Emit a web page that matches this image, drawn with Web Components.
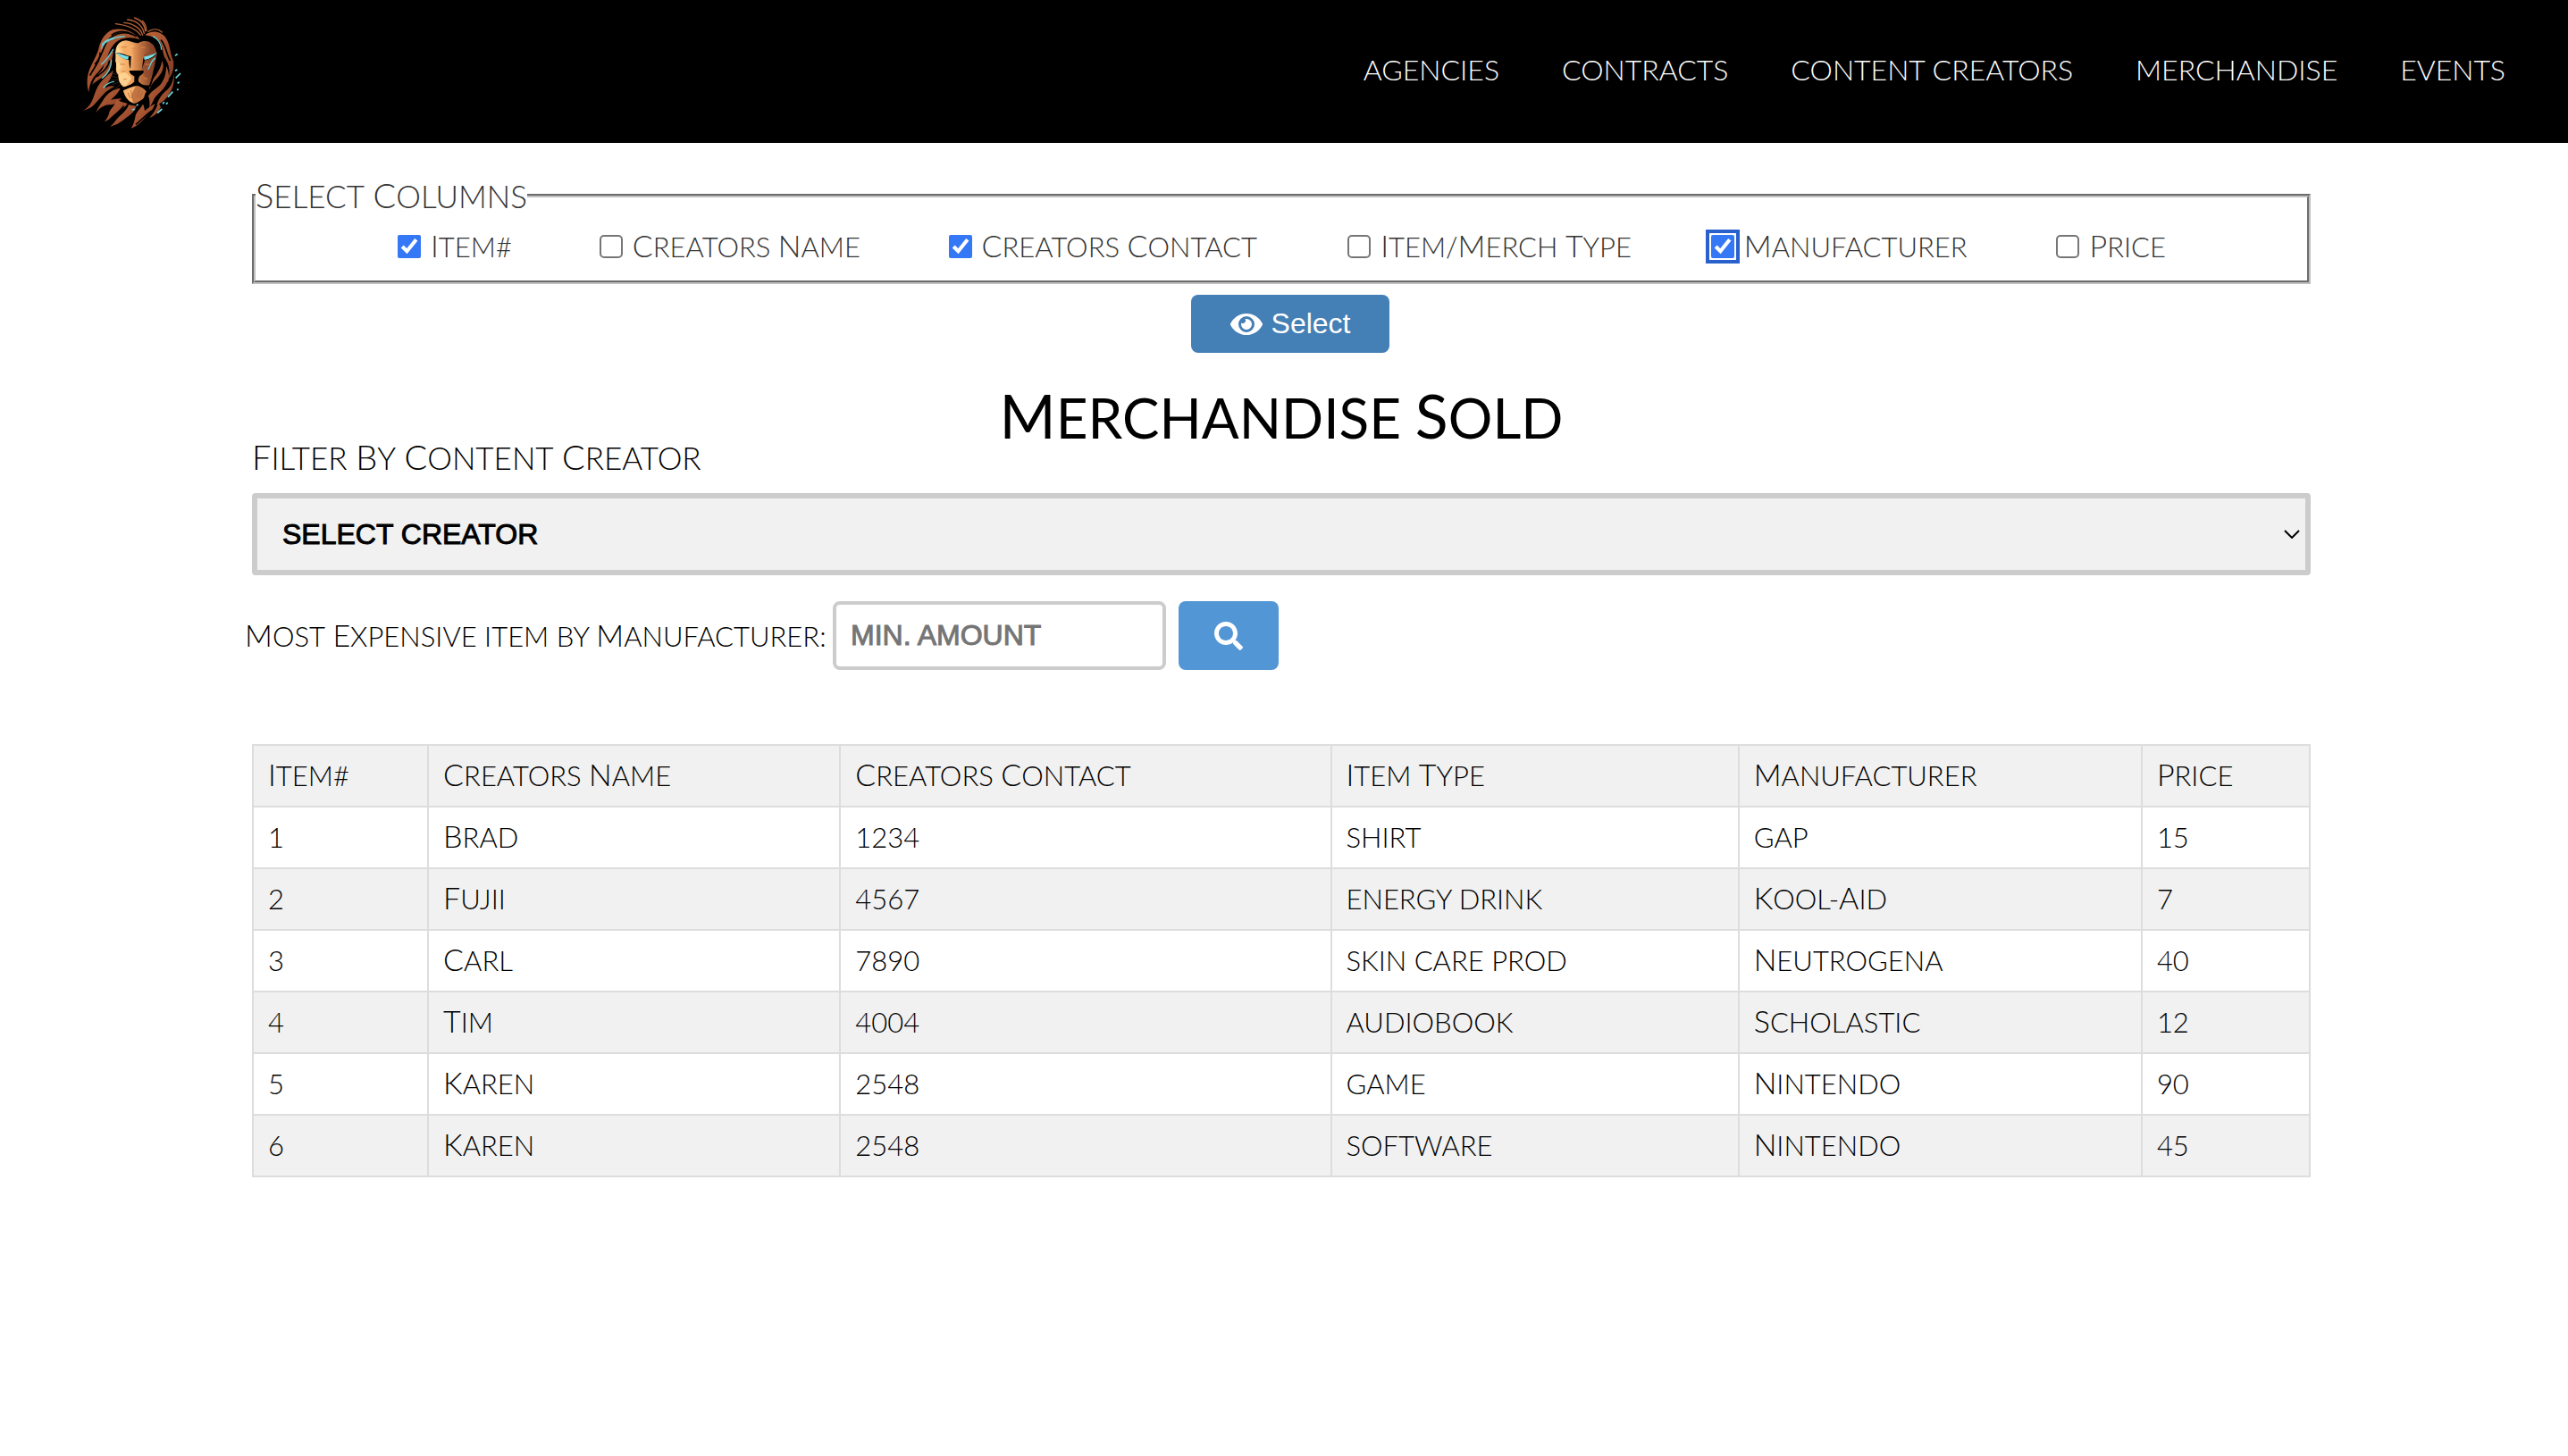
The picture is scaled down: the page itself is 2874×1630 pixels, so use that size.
<!DOCTYPE html>
<html lang="en">
<head>
<meta charset="utf-8">
<title>Merchandise</title>
<style>
body { margin: 0; background: #fff; color: #000; font-family: Lato, "Open Sans", sans-serif; font-weight: 300; font-size: 31px; line-height: 40px; }
</style>
</head>
<body>
<merch-page></merch-page>
<script>
// Wraps capitalised words so that their first letter can be set a step larger.
const caps = (text) => text.replace(/[A-Za-z#:]+[\/-]?/g, (w) =>
  /^[A-Z]/.test(w) ? `<span class="w">${w}</span>` : w);

const CAPS_CSS = `
  .caps { text-transform: uppercase; }
  .w { display: inline-block; }
  .w::first-letter { font-size: var(--cap, 34px); }
`;

class BaseElement extends HTMLElement {
  connectedCallback() {
    if (this.shadowRoot) return;
    this.attachShadow({ mode: 'open' }).innerHTML = `<style>*{box-sizing:border-box}${CAPS_CSS}${this.css()}</style>${this.html()}`;
  }
}

class LionLogo extends BaseElement {
  css() { return `:host{display:block} svg{display:block;width:180px;height:160px}`; }
  html() {
    return `<svg viewBox="0 0 540 480" role="img" aria-label="Lion">
    <defs>
      <linearGradient id="face" x1="0" x2="1"><stop offset="0" stop-color="#ffd08b"/><stop offset=".4" stop-color="#eda05c"/><stop offset=".6" stop-color="#c27542"/><stop offset="1" stop-color="#6b321f"/></linearGradient>
      <linearGradient id="mane" x1="0" y1="0" x2="1" y2="1"><stop offset="0" stop-color="#bd6439"/><stop offset=".55" stop-color="#a04f2f"/><stop offset="1" stop-color="#7c3a26"/></linearGradient>
    </defs>
    <g fill="url(#mane)">
      <path d="M290 133C270 104 230 92 198 100C170 110 156 140 150 168C140 200 114 232 113 268C112 286 114 298 118 310C120 280 130 262 148 244C160 230 172 216 180 196C186 170 200 142 226 132C250 124 270 126 290 133Z"/>
      <path d="M306 118C330 98 362 106 376 126C392 148 390 180 402 204C406 232 398 252 384 268C394 240 386 214 376 198C364 182 370 156 354 138C340 124 322 120 306 118Z"/>
      <path d="M202 172C184 180 172 206 166 228C156 246 138 258 130 284C146 268 168 262 180 246C194 226 194 200 202 172Z"/>
      <path d="M200 236C182 252 168 262 154 282C138 304 136 330 124 348C118 358 108 366 100 371C122 366 142 352 154 334C168 312 184 300 206 290C190 286 184 290 172 296C182 276 196 262 200 236Z"/>
      <path d="M224 296C200 300 182 312 170 330C162 344 152 356 142 378C158 358 176 350 190 352C204 352 218 344 228 330C212 332 202 332 192 336C204 324 218 312 224 296Z"/>
      <path d="M212 334C208 350 196 362 188 374C184 390 178 400 170 409C186 402 200 394 210 382C226 366 240 362 248 348C238 344 224 344 212 334Z"/>
      <path d="M252 352C246 370 230 382 218 394C208 404 202 416 190 425C214 420 232 406 246 394C262 382 274 372 278 356Z"/>
      <path d="M300 350C290 368 276 376 274 394C270 410 268 420 260 431C280 424 294 410 306 396C318 382 334 372 340 348C326 356 316 364 306 372C304 364 304 356 300 350Z"/>
      <path d="M318 322C330 304 350 296 362 280C374 262 378 244 378 222C390 246 390 270 378 290C366 306 350 314 340 328C334 340 328 352 322 362C322 348 324 336 318 322Z"/>
      <path d="M364 204C374 226 364 246 350 260C336 274 326 284 322 300C314 280 330 262 342 250C354 236 362 222 364 204Z"/>
      <path d="M402 248C404 274 392 294 376 306C362 318 352 334 346 352C364 346 380 332 388 316C400 298 408 272 402 248Z"/>
      <path d="M352 344C346 362 336 380 322 396C342 388 352 376 360 360Z"/>
    </g>
    <g fill="none" stroke="#b86339" stroke-width="4" stroke-linecap="round">
      <path d="M299 118C292 94 266 78 236 76"/><path d="M304 112C298 84 276 68 248 66"/><path d="M308 104C306 80 290 66 272 60"/><path d="M292 118C276 96 244 84 208 80"/><path d="M311 104C312 88 306 78 298 70"/><path d="M318 106C334 94 352 98 364 108"/>
    </g>
    <g fill="none" stroke="#000" stroke-width="5">
      <path d="M278 122C244 102 206 108 182 136C166 156 162 194 138 216"/><path d="M266 116C236 100 212 106 194 118M156 176C160 200 136 226 122 254M188 202C184 230 162 244 144 258M180 314C160 324 146 346 132 360M236 356C220 376 202 388 188 402M330 372C310 386 296 402 276 418M384 276C376 302 352 314 346 330M356 220C352 244 330 262 322 280M360 134C378 152 380 188 392 204"/>
    </g>
    <path d="M208 172C210 148 226 136 244 136C262 138 274 148 286 144C304 134 324 138 332 150C346 162 348 184 340 204C338 232 330 262 322 284C314 300 296 294 282 292C260 292 246 298 232 290C218 278 218 262 216 250C204 238 214 220 208 204Z" fill="url(#face)" stroke="#000" stroke-width="12" paint-order="stroke"/>
    <path d="M242 146C230 154 228 166 236 176L256 188L252 238L246 252L262 252L260 226L268 188L262 176L270 152Z" fill="#f4ab65"/>
    <path d="M292 150C312 146 330 158 328 170L304 182L296 232L302 250L318 272L340 220L348 180L334 148Z" fill="#8d472c" opacity=".65"/>
    <path d="M216 160L228 174L206 178ZM206 196C214 212 224 208 228 226L216 236ZM218 250L240 242L262 262L242 290L222 276Z" fill="#ffd999" opacity=".8"/>
    <path d="M226 158h20M262 162h18M222 216h18M228 240h14M272 210h18M292 160h15M308 216h12M234 266h12M302 264h14" stroke="#d88449" stroke-width="3"/>
    <path d="M252 188C254 200 252 218 258 232L260 190ZM304 190C298 206 300 222 296 234L306 204Z" fill="#000"/>
    <path d="M210 178C228 176 244 186 260 190L256 202C240 202 228 194 210 178ZM300 200C308 188 330 184 350 176C338 192 322 202 302 202Z" fill="#000"/>
    <path d="M210 178C222 180 238 186 252 190L250 200C236 200 224 192 210 178ZM304 190C318 188 334 182 348 176C334 192 318 200 304 200Z" fill="#75e1e7"/>
    <path d="M254 237L302 237C304 244 298 250 290 254C286 258 284 266 285 274C292 284 306 288 320 286L318 294C302 296 290 290 282 286C266 292 248 298 230 294C246 290 264 284 271 274L271 256C262 252 254 246 254 237Z" fill="#000"/>
    <path d="M234 304C250 298 266 288 280 288C294 290 306 300 312 308C304 314 308 326 298 334C288 340 282 346 270 348C250 342 238 324 234 304Z" fill="#c27542" stroke="#000" stroke-width="10" paint-order="stroke"/>
    <path d="M234 304C250 298 264 290 276 290C268 304 256 318 268 346C250 340 238 322 234 304Z" fill="#f8b46c"/>
    <path d="M250 312l8 18M260 304l4 26M288 302l-8 24M298 308l-10 22" stroke="#9d5732" stroke-width="2"/>
    <g fill="none" stroke="#66d0d4" stroke-width="4" stroke-linecap="round">
      <path d="M162 150C178 128 208 126 238 122M160 162C168 144 184 134 202 130"/><path d="M334 122C352 132 362 150 362 166"/><path d="M160 216C178 204 186 186 200 166"/><path d="M194 202C194 230 182 248 164 262"/><path d="M168 294C178 280 190 276 202 274"/><path d="M318 232C326 216 328 204 340 196"/>
    </g>
    <g fill="none" stroke="#66d9de" stroke-width="5"><path d="M408 187l8-6M408 238l7-4M410 262l16-16M416 280l6-5M384 326l16-18M366 348l6-5M348 380l16-14M378 350l5-6M264 370l8-4M278 354l6-3M414 302l5-3"/></g>
    <path d="M218 252L192 244M216 260L190 256M218 268L192 270M220 276L198 284M224 284L206 298" stroke="#4d2d1c" stroke-width="2"/>
    </svg>`;
  }
}
customElements.define('lion-logo', LionLogo);

class SiteNav extends BaseElement {
  css() { return `
    :host{display:block;background:#000}
    header{display:flex;align-items:center;justify-content:space-between;padding:0 70px 0 60px}
    nav{display:flex;gap:70px;padding-bottom:4px}
    a{color:#fff;text-decoration:none;font-size:32px}`; }
  html() {
    return `<header><lion-logo></lion-logo><nav>${['AGENCIES', 'CONTRACTS', 'CONTENT CREATORS', 'MERCHANDISE', 'EVENTS']
      .map((t) => `<a href="#">${t}</a>`).join('')}</nav></header>`;
  }
}
customElements.define('site-nav', SiteNav);

class ColumnPicker extends BaseElement {
  css() { return `
    :host{display:block;color:#333}
    fieldset{margin:0;padding:0;border:4px groove #c0c0c0}
    legend{padding:0;font-size:35px;--cap:38px;line-height:40px}
    .row{display:grid;grid-template-columns:226fr 391fr 447fr 407fr 387fr 119fr;padding:16px 158px 18px 159px}
    label{display:flex;align-items:center;gap:11px;white-space:nowrap;line-height:40px}
    input{width:26px;height:26px;margin:0;accent-color:#3478f6;flex:none}
    input:not(:checked){appearance:none;border:2px solid #767676;border-radius:5px;background:#fff}
    input.focused{outline:4px solid #2860cc;outline-offset:2px;border-radius:4px}
    .btn{display:flex;justify-content:center;padding:12px 0 0 20px}
    button{display:flex;align-items:center;gap:10px;height:65px;padding:0 44px;border:0;border-radius:8px;background:#447fb6;color:#fff;font:32px "Liberation Sans",Arial,sans-serif}
    svg{width:36px;height:32px}`; }
  html() {
    const cols = [['Item#', 1], ['Creators Name', 0], ['Creators Contact', 1], ['Item/Merch Type', 0], ['Manufacturer', 1, 1], ['Price', 0]];
    return `<fieldset><legend class="caps">${caps('Select Columns')}</legend><div class="row">${cols.map(([t, on, f]) =>
      `<label><input type="checkbox"${on ? ' checked' : ''}${f ? ' class="focused"' : ''}><span class="caps">${caps(t)}</span></label>`).join('')}</div></fieldset>
      <div class="btn"><button type="button"><svg viewBox="0 0 576 512" aria-hidden="true"><path fill="currentColor" d="M572.52 241.4C518.29 135.59 410.93 64 288 64S57.68 135.64 3.48 241.41a32.35 32.35 0 0 0 0 29.19C57.71 376.41 165.07 448 288 448s230.32-71.64 284.52-177.41a32.35 32.35 0 0 0 0-29.19zM288 400a144 144 0 1 1 144-144 143.93 143.93 0 0 1-144 144zm0-240a95.31 95.31 0 0 0-25.31 3.79 47.85 47.85 0 0 1-66.9 66.9A95.78 95.78 0 1 0 288 160z"/></svg>Select</button></div>`;
  }
}
customElements.define('column-picker', ColumnPicker);

class MerchFilter extends BaseElement {
  css() { return `
    :host{display:block}
    .creator{display:block;font-size:35px;--cap:38px;line-height:40px}
    .pick{display:grid;margin-top:20px}
    select{grid-area:1/1;appearance:none;width:100%;height:92px;border:6px solid #ccc;border-radius:4px;background:#f1f1f1;color:#000;padding:0 28px;margin:0;font:32px "Liberation Sans",Arial,sans-serif;-webkit-text-stroke:1px #000}
    .pick svg{grid-area:1/1;align-self:center;justify-self:end;margin-right:12px;width:18px;height:10px;pointer-events:none}
    form{display:flex;align-items:center;margin:29px 0 0 -8px}
    .most{width:658px;white-space:nowrap}
    input{width:373px;height:77px;border:4px solid #ccc;border-radius:8px;padding:0 16px;font:32px "Liberation Sans",Arial,sans-serif;background:#fff}
    input::placeholder{color:#757575;opacity:1;-webkit-text-stroke:1px #757575}
    button{display:grid;place-items:center;width:112px;height:77px;margin-left:14px;padding:0;border:0;border-radius:8px;background:#5296d5;color:#fff}
    button svg{width:32px;height:32px}`; }
  html() {
    return `<label class="creator caps" for="creator">${caps('Filter By Content Creator')}</label>
      <div class="pick"><select id="creator"><option>SELECT CREATOR</option></select>
      <svg viewBox="0 0 18 10" aria-hidden="true"><path d="M1 1l8 8 8-8" fill="none" stroke="#000" stroke-width="2"/></svg></div>
      <form><label class="most caps" for="min">${caps('Most Expensive item by Manufacturer:')}</label>
      <input id="min" type="text" placeholder="MIN. AMOUNT">
      <button type="button" aria-label="Search"><svg viewBox="0 0 512 512" aria-hidden="true"><path fill="currentColor" d="M505 442.7L405.3 343c-4.500-4.500-10.600-7-17-7H372c27.600-35.300 44-79.700 44-128C416 93.100 322.900 0 208 0S0 93.100 0 208s93.100 208 208 208c48.300 0 92.700-16.400 128-44v16.300c0 6.400 2.500 12.500 7 17l99.700 99.700c9.400 9.400 24.600 9.400 33.900 0l28.300-28.300c9.400-9.400 9.400-24.600.1-34zM208 336c-70.700 0-128-57.200-128-128 0-70.700 57.200-128 128-128 70.700 0 128 57.200 128 128 0 70.700-57.200 128-128 128z"/></svg></button></form>`;
  }
}
customElements.define('merch-filter', MerchFilter);

class MerchTable extends BaseElement {
  css() { return `
    :host{display:block}
    table{width:100%;border-collapse:collapse;table-layout:fixed}
    th,td{border:2px solid #ddd;height:69px;padding:0 16px 2px;text-align:left;font-weight:300}
    tr:nth-child(odd){background:#f1f1f1}`; }
  html() {
    const rows = [['1', 'Brad', '1234', 'shirt', 'gap', '15'], ['2', 'Fujii', '4567', 'energy drink', 'Kool-Aid', '7'],
      ['3', 'Carl', '7890', 'skin care prod', 'Neutrogena', '40'], ['4', 'Tim', '4004', 'audioBook', 'Scholastic', '12'],
      ['5', 'Karen', '2548', 'game', 'Nintendo', '90'], ['6', 'Karen', '2548', 'software', 'Nintendo', '45']];
    const line = (tag, cells) => `<tr>${cells.map((c) => `<${tag}>${caps(c)}</${tag}>`).join('')}</tr>`;
    return `<table class="caps"><colgroup>${[196, 461, 549, 456, 451, 188].map((w) => `<col style="width:${w}px">`).join('')}</colgroup>
      <tbody>${line('th', ['Item#', 'Creators Name', 'Creators Contact', 'Item Type', 'Manufacturer', 'Price'])}${rows.map((r) => line('td', r)).join('')}</tbody></table>`;
  }
}
customElements.define('merch-table', MerchTable);

class MerchPage extends BaseElement {
  css() { return `
    :host{display:block}
    main{display:flex;flex-direction:column;padding:38px 288px 0 282px}
    h1{margin:46px 0 0;font-size:62px;--cap:68px;line-height:48px;font-weight:400;text-align:center}
    merch-table{margin-top:83px}`; }
  html() {
    return `<site-nav></site-nav><main><column-picker></column-picker><h1 class="caps">${caps('Merchandise Sold')}</h1><merch-filter></merch-filter><merch-table></merch-table></main>`;
  }
}
customElements.define('merch-page', MerchPage);
</script>
</body>
</html>
